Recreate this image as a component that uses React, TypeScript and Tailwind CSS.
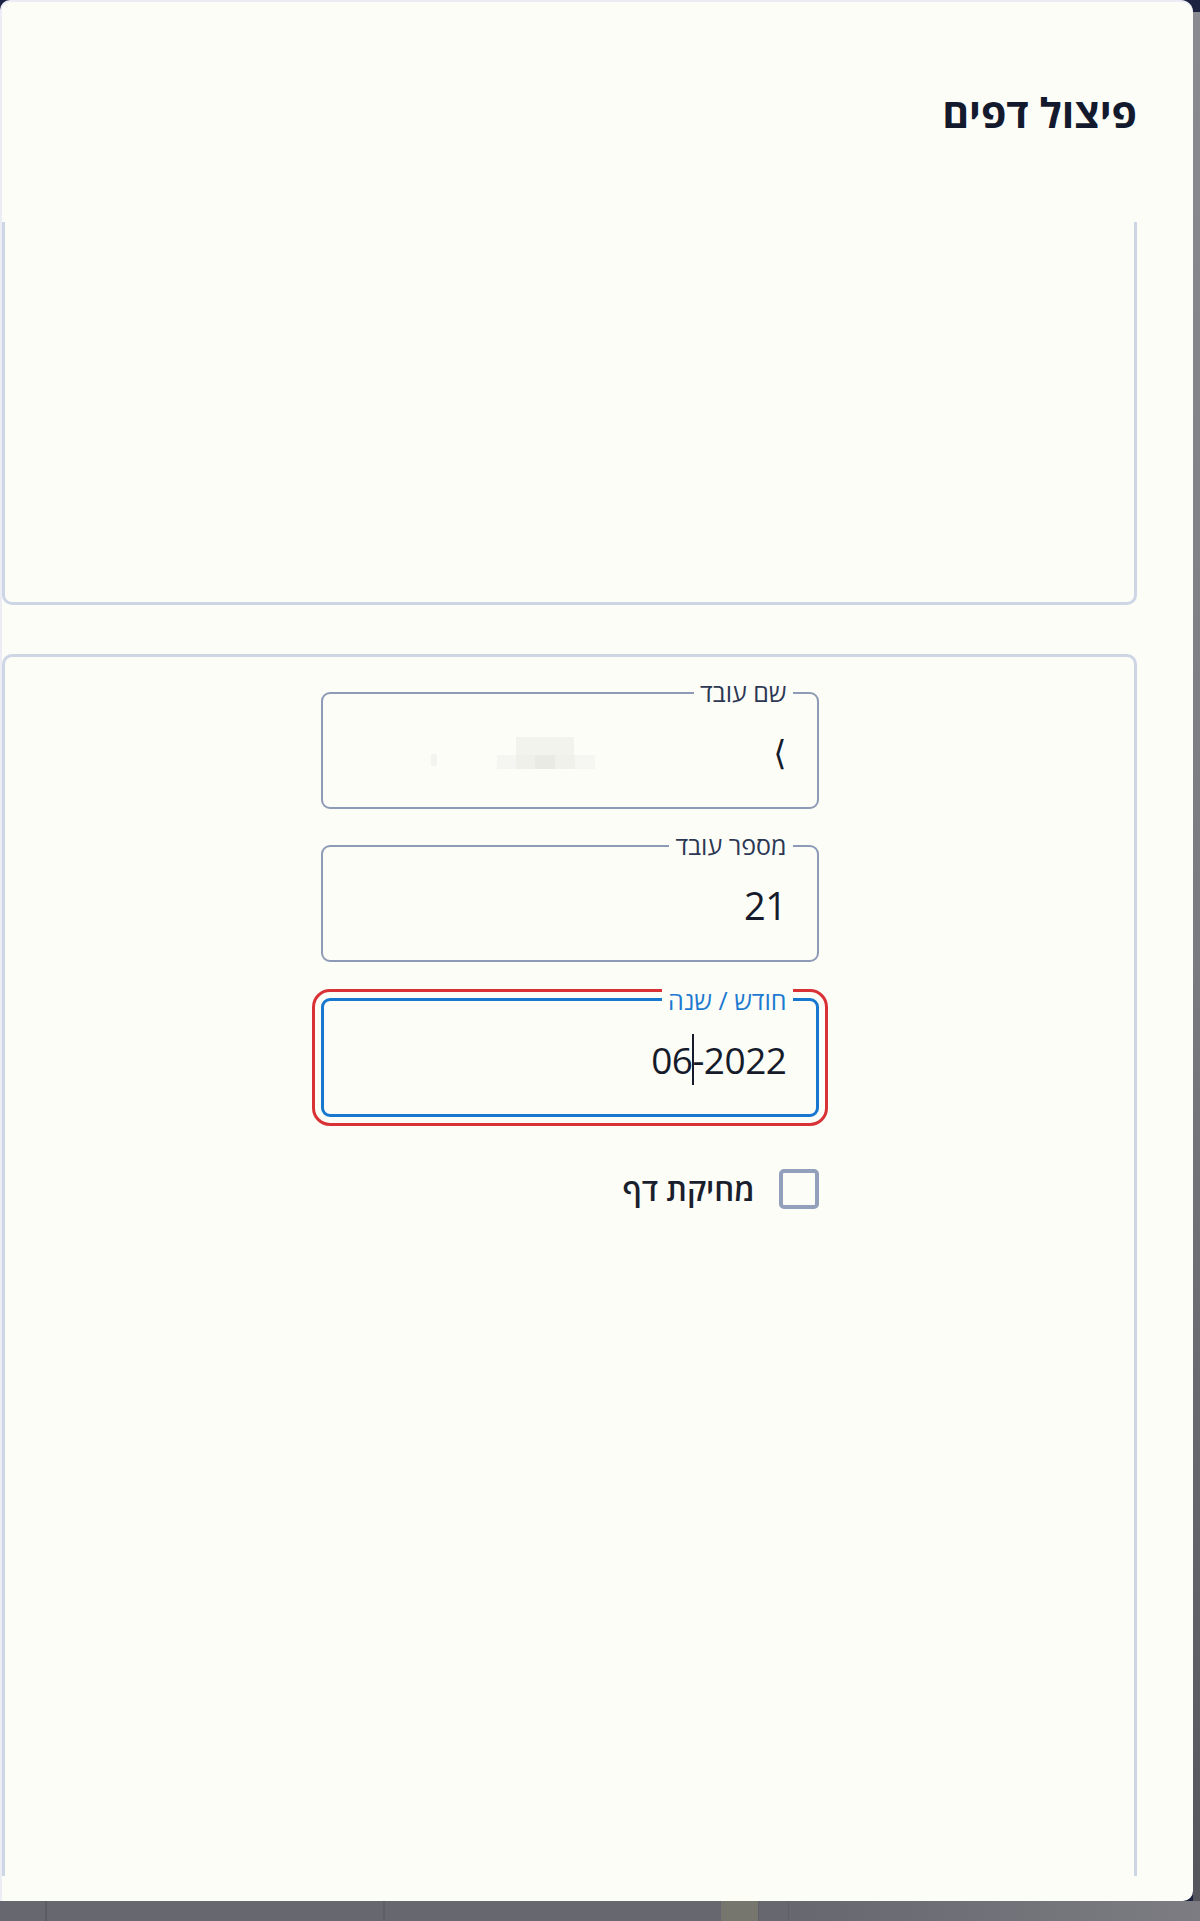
import React from "react";

function Field({
  label,
  children,
}: {
  label: string;
  children: React.ReactNode;
}) {
  return (
    <div className="relative w-[498px] h-[117px] border-2 border-[#8d9bb6] rounded-[9px] flex items-center justify-end pr-[30px] pt-[4px]">
      <span
        dir="rtl"
        className="absolute -top-[16px] right-[24px] px-[6px] bg-[#fdfdf8] text-[25px] leading-[28px] text-[#2c3853]"
      >
        {label}
      </span>
      {children}
    </div>
  );
}

export default function App() {
  return (
    <div className="w-[1200px] h-[1921px] bg-[#66676f] flex flex-col overflow-hidden font-['Open_Sans','Liberation_Sans',sans-serif]">
      <div className="flex h-[1901px] bg-[#1c2340]">
        {/* main panel */}
        <div className="flex-1 flex flex-col bg-[#fdfdf8] border-l-2 border-t-2 border-[#ececf4] rounded-tl-[10px] rounded-tr-[12px] rounded-br-[10px] pr-[56px] overflow-hidden">
          <header className="h-[220px] flex items-center justify-end pt-[2px]">
            <h1 dir="rtl" className="text-[41px] font-bold text-[#141a2e]">
              פיצול דפים
            </h1>
          </header>

          <div className="h-[1654px] overflow-hidden flex flex-col">
            {/* upper section (scrolled) */}
            <div className="h-[383px] shrink-0 border-x-[3px] border-b-[3px] border-[#cdd6e5] rounded-b-[10px]" />

            {/* form section */}
            <div className="mt-[49px] h-[1400px] shrink-0 border-x-[3px] border-t-[3px] border-[#cdd6e5] rounded-t-[10px] pt-[35px] flex flex-col items-center gap-[36px]">
              <Field label="שם עובד">
                <div className="flex items-center mr-[178px] opacity-90">
                  <div className="w-[6px] h-[12px] bg-[#f3f3ef] mr-[60px] mt-[14px]" />
                  <div className="flex flex-col">
                    <div className="ml-[19px] w-[58px] h-[18px] bg-[#f3f3ee]" />
                    <div className="flex h-[14px]">
                      <div className="w-[19px] bg-[#f5f5f1]" />
                      <div className="w-[19px] bg-[#efefea]" />
                      <div className="w-[20px] bg-[#e8e8e3]" />
                      <div className="w-[20px] bg-[#f0f0eb]" />
                      <div className="w-[20px] bg-[#f6f6f2]" />
                    </div>
                  </div>
                </div>
                <span className="text-[34px] leading-none text-[#151b2b] font-['DejaVu_Sans',sans-serif]">⟨</span>
              </Field>

              <Field label="מספר עובד">
                <span className="text-[38px] tracking-[-0.5px] text-[#151b2b]">21</span>
              </Field>

              {/* focused field */}
              <div className="relative w-[498px] h-[119px] border-[3px] border-[#1878cf] rounded-[9px] outline-3 outline-[#d83236] outline-offset-[6px] flex items-center justify-end pr-[29px] pt-[4px]">
                <span
                  dir="rtl"
                  className="absolute -top-[15px] right-[23px] px-[6px] bg-[#fdfdf8] text-[25px] leading-[28px] text-[#1c7ad0]"
                >
                  חודש / שנה
                </span>
                <span className="relative text-[37px] tracking-[-0.5px] text-[#151b2b]">
                  06
                  <span className="absolute left-[41px] top-[2px] w-[2px] h-[51px] bg-[#151b2b]" />
                  -2022
                </span>
              </div>

              <div className="w-[498px] flex items-center justify-end gap-[24px] mt-[13px]">
                <span dir="rtl" className="text-[31px] font-semibold text-[#1a1f2e]">
                  מחיקת דף
                </span>
                <div className="w-[40px] h-[40px] border-[4px] border-[#93a0bb] rounded-[5px]" />
              </div>
            </div>
          </div>
        </div>

        {/* background app peeking at right */}
        <div className="w-[7px] flex flex-col">
          <div className="h-[12px] bg-[#1c2340]" />
          <div className="flex-1 bg-gradient-to-b from-[#8a8a91] via-[#7a7a81] to-[#55565d]" />
        </div>
      </div>

      {/* bottom strip */}
      <div className="h-[20px] flex bg-[#66676f]">
        <div className="w-[47px] border-r-2 border-[#5b5c63]" />
        <div className="w-[338px] border-r-2 border-[#5f6066]" />
        <div className="w-[336px]" />
        <div className="w-[38px] bg-[#76766f] border-r border-[#5f6066]" />
        <div className="w-[30px] border-r border-[#5f6066]" />
        <div className="flex-1 bg-gradient-to-r from-[#66676f] to-[#7c7c82]" />
      </div>
    </div>
  );
}
